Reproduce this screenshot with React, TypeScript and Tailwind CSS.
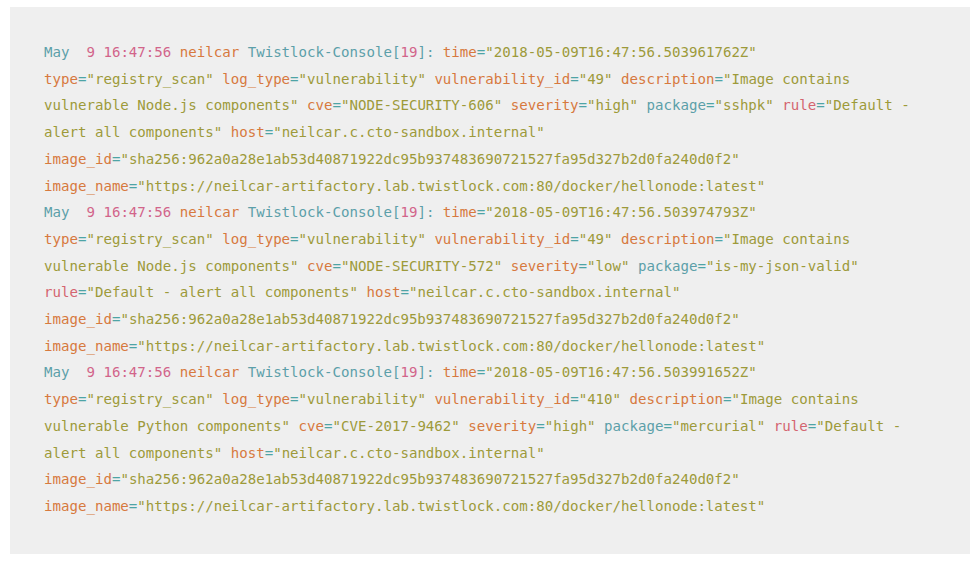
import React from "react";

type Seg = [string, string];

const teal = "text-[#5c9fa9]";
const pink = "text-[#d2648a]";
const orange = "text-[#d7793e]";
const red = "text-[#d46570]";
const olive = "text-[#9d9a3a]";
const eq = "text-[#4ea4a6]";

const keyColor = (k: string) => {
  if (k === "package") return teal;
  if (k === "rule") return red;
  return orange;
};

// split a key="value" line into coloured pieces
const kv = (line: string): Seg[] => {
  const out: Seg[] = [];
  const re = /([a-z_]+)=/g;
  let last = 0;
  let m: RegExpExecArray | null;
  while ((m = re.exec(line))) {
    if (m.index > last) out.push([line.slice(last, m.index), olive]);
    out.push([m[1], keyColor(m[1])]);
    out.push(["=", eq]);
    last = m.index + m[0].length;
  }
  if (last < line.length) out.push([line.slice(last), olive]);
  return out;
};

const head = (stamp: string): Seg[] => [
  ["May", teal],
  ["  9 16:47:56 ", pink],
  ["neilcar ", orange],
  ["Twistlock-Console[", teal],
  ["19", pink],
  ["]: ", teal],
  ...kv(`time="2018-05-09T16:47:56.${stamp}Z"`),
];

const imageId =
  'image_id="sha256:962a0a28e1ab53d40871922dc95b937483690721527fa95d327b2d0fa240d0f2"';
const imageName =
  'image_name="https://neilcar-artifactory.lab.twistlock.com:80/docker/hellonode:latest"';

const lines: Seg[][] = [
  head("503961762"),
  kv('type="registry_scan" log_type="vulnerability" vulnerability_id="49" description="Image contains'),
  kv('vulnerable Node.js components" cve="NODE-SECURITY-606" severity="high" package="sshpk" rule="Default -'),
  kv('alert all components" host="neilcar.c.cto-sandbox.internal"'),
  kv(imageId),
  kv(imageName),
  head("503974793"),
  kv('type="registry_scan" log_type="vulnerability" vulnerability_id="49" description="Image contains'),
  kv('vulnerable Node.js components" cve="NODE-SECURITY-572" severity="low" package="is-my-json-valid"'),
  kv('rule="Default - alert all components" host="neilcar.c.cto-sandbox.internal"'),
  kv(imageId),
  kv(imageName),
  head("503991652"),
  kv('type="registry_scan" log_type="vulnerability" vulnerability_id="410" description="Image contains'),
  kv('vulnerable Python components" cve="CVE-2017-9462" severity="high" package="mercurial" rule="Default -'),
  kv('alert all components" host="neilcar.c.cto-sandbox.internal"'),
  kv(imageId),
  kv(imageName),
];

const App = () => {
  return (
    <div className="min-h-[562px] bg-white pt-[7px] pl-[10px]">
      <div className="w-[960px] bg-[#efefef] pt-[32px] pb-[34px] pl-[34px] font-['DejaVu_Sans_Mono',monospace] text-[14.1px] leading-[26.7px]">
        {lines.map((segs, i) => (
          <div key={i} className="whitespace-pre">
            {segs.map(([t, c], j) => (
              <span key={j} className={c}>
                {t}
              </span>
            ))}
          </div>
        ))}
      </div>
    </div>
  );
};

export default App;
